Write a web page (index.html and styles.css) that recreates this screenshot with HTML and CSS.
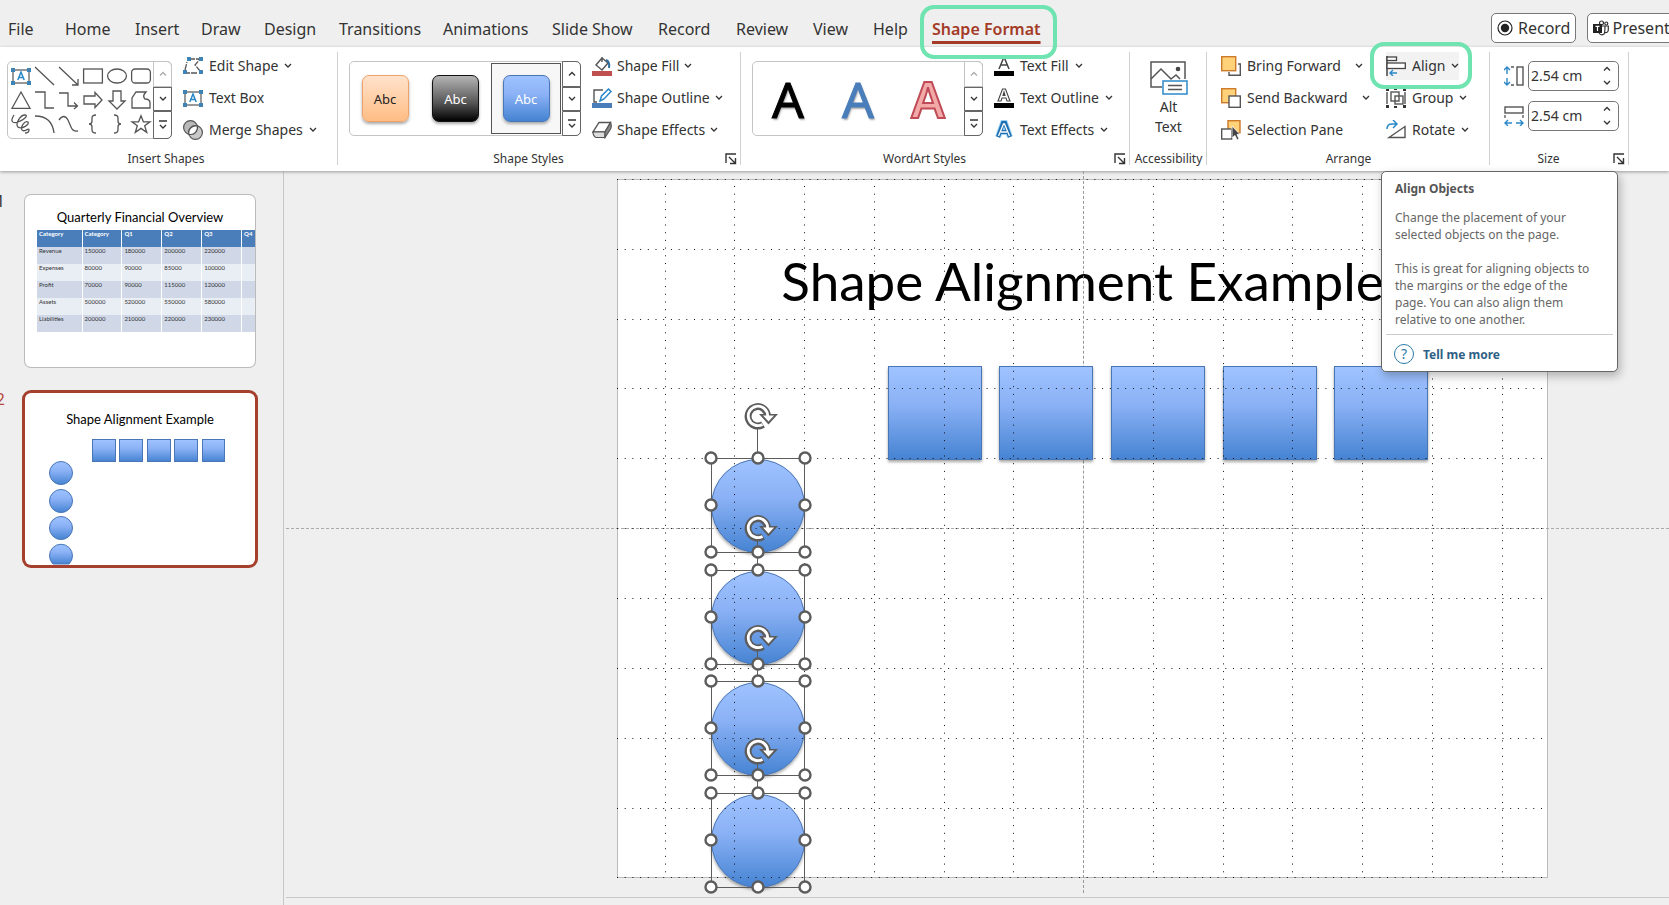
FILE: index.html
```html
<!DOCTYPE html>
<html lang="en">
<head>
<meta charset="utf-8">
<title>Shape Format</title>
<link rel="stylesheet" href="styles.css">
</head>
<body>
<svg class="defs" width="0" height="0" aria-hidden="true">
  <defs>
    <linearGradient id="blue" x1="0" y1="0" x2="0" y2="1">
      <stop offset="0" stop-color="#9fc3ff"/><stop offset=".4" stop-color="#8cb2f6"/><stop offset="1" stop-color="#4583d2"/>
    </linearGradient>
    <filter id="drop" x="-20%" y="-20%" width="140%" height="140%">
      <feDropShadow dx="0" dy="2" stdDeviation="1.5" flood-opacity=".35"/>
    </filter>
    <symbol id="chev" viewBox="0 0 8 8"><path d="M1 2 4 5 7 2" fill="none" stroke="#333" stroke-width="1.3"/></symbol>
    <symbol id="chev-up" viewBox="0 0 8 8"><path d="M1 5.5 4 2.5 7 5.5" fill="none" stroke="currentColor" stroke-width="1.3"/></symbol>
    <symbol id="more" viewBox="0 0 10 10"><path d="M1 1H9M2 5 5 8 8 5" fill="none" stroke="#333" stroke-width="1.3"/></symbol>
    <symbol id="launch" viewBox="0 0 12 12"><path d="M1 10V1H11M4 4 10 10M10.500 5V10.500H5" fill="none" stroke="#333" stroke-width="1.4"/></symbol>
    <symbol id="textbox" viewBox="0 0 20 18">
      <rect x="2" y="3" width="16" height="13" fill="#fff" stroke="#555" stroke-width="1.200"/>
      <path d="M6.800 13 10 5 13.200 13M8 10.500H12" fill="none" stroke="#2b88c8" stroke-width="1.500"/>
      <g fill="#3f82b4" stroke="none"><rect x="0" y="1" width="4" height="4"/><rect x="16" y="1" width="4" height="4"/><rect x="0" y="14" width="4" height="4"/><rect x="16" y="14" width="4" height="4"/></g>
    </symbol>
    <symbol id="handle" viewBox="-7 -7 14 14"><circle r="5.500" fill="#fff" stroke="#5c5c5c" stroke-width="2.400"/></symbol>
    <symbol id="rotor" viewBox="-16 -14 36 28">
      <path d="M5 8.500A9.700 9.700 0 1 1 9.500 0" fill="none" stroke="#5c5c5c" stroke-width="7"/>
      <path d="M1 -2H20L10.500 8.500Z" fill="#5c5c5c"/>
      <path d="M4.500 8.500A9.700 9.700 0 1 1 9.700 0" fill="none" stroke="#fff" stroke-width="2.800"/>
      <path d="M5 -.5H16L10.500 5.500Z" fill="#fff"/>
    </symbol>
    <g id="selection">
      <circle cx="47" cy="47" r="46.500" fill="url(#blue)" stroke="#4a76b5" filter="url(#drop)"/>
    </g>
    <g id="frame">
      <rect x=".5" y=".5" width="93" height="94" fill="none" stroke="#5c5c5c"/>
      <use href="#handle" x="-7" y="-7" width="14" height="14"/><use href="#handle" x="40" y="-7" width="14" height="14"/><use href="#handle" x="87" y="-7" width="14" height="14"/>
      <use href="#handle" x="-7" y="40" width="14" height="14"/><use href="#handle" x="87" y="40" width="14" height="14"/>
      <use href="#handle" x="-7" y="87" width="14" height="14"/><use href="#handle" x="40" y="87" width="14" height="14"/><use href="#handle" x="87" y="87" width="14" height="14"/>
    </g>
  </defs>
</svg>

<header class="tabbar">
  <nav class="tabs" aria-label="Ribbon tabs">
    <button class="tab">File</button><button class="tab">Home</button><button class="tab">Insert</button><button class="tab">Draw</button><button class="tab">Design</button><button class="tab">Transitions</button><button class="tab">Animations</button><button class="tab">Slide Show</button><button class="tab">Record</button><button class="tab">Review</button><button class="tab">View</button><button class="tab">Help</button><button class="tab tab-active">Shape Format</button>
  </nav>
  <div class="actions">
    <button class="action"><svg width="16" height="16" viewBox="0 0 16 16"><circle cx="8" cy="8" r="7" fill="none" stroke="#222" stroke-width="1.200"/><circle cx="8" cy="8" r="4.200" fill="#222"/></svg>Record</button>
    <button class="action action-present"><svg width="16" height="16" viewBox="0 0 16 16"><g fill="none" stroke="#333" stroke-width="1.200"><circle cx="8.500" cy="3" r="2"/><circle cx="13.300" cy="3.500" r="1.500"/><path d="M9 6H15.300V10Q15 13 12 12.500M6 13Q8 16 11 14Q12 13 12 6"/></g><rect y="4" width="9" height="9" fill="#222"/><path d="M2.500 6.300H6.500M4.500 6.300V11" stroke="#fff" stroke-width="1.200"/></svg>Present</button>
  </div>
</header>

<section class="ribbon" aria-label="Shape Format">
  <div class="group group-insert">
    <div class="group-body">
      <div class="gallery gallery-small">
        <div class="shapes">
          <svg viewBox="0 0 20 18"><use href="#textbox"/></svg>
          <svg viewBox="0 0 20 18"><path d="M0 0 19 18"/></svg>
          <svg viewBox="0 0 20 18"><path d="M0 0 19 18M19 12V18H13"/></svg>
          <svg viewBox="0 0 20 18"><rect x=".6" y="2" width="18.800" height="14"/></svg>
          <svg viewBox="0 0 20 18"><ellipse cx="10" cy="9" rx="9.400" ry="7"/></svg>
          <svg viewBox="0 0 20 18"><rect x=".6" y="2" width="18.800" height="14" rx="3.500"/></svg>
          <svg viewBox="0 0 20 18"><path d="M10 1 19 17.300H1Z"/></svg>
          <svg viewBox="0 0 20 18"><path d="M0 1H10V17H19"/></svg>
          <svg viewBox="0 0 20 18"><path d="M0 2H9V15H18M15 11.500 18.500 15 15 18"/></svg>
          <svg viewBox="0 0 20 18"><path d="M1 5H12V1.500L19 9 12 16.500V13H1Z"/></svg>
          <svg viewBox="0 0 20 18"><path d="M6 0H14V10H18L10 18 2 10H6Z"/></svg>
          <svg viewBox="0 0 20 18"><path d="M5 1H15Q11 5 14 8 19 8 19 12V17H1V7Z"/></svg>
          <svg viewBox="0 0 20 18"><path d="M3 0C-1 6 1 9 7 7 15 4 17 0 14 0 9 0 4 9 7 12 11 15 19 9 17 7 14 5 9 12 11 15 13 18 18 12 18 15 18 18 15 18 14 18"/></svg>
          <svg viewBox="0 0 20 18"><path d="M0 1Q17 1 19 18"/></svg>
          <svg viewBox="0 0 20 18"><path d="M0 5Q5 -2 9 5L12 12Q14 17 19 16"/></svg>
          <svg viewBox="0 0 20 18"><path d="M13 0Q9 0 9 3V6Q9 9 6 9 9 9 9 12V15Q9 18 13 18"/></svg>
          <svg viewBox="0 0 20 18"><path d="M7 0Q11 0 11 3V6Q11 9 14 9 11 9 11 12V15Q11 18 7 18"/></svg>
          <svg viewBox="0 0 20 18"><path d="M10 .8 12.400 6.800H19L13.700 10.800 15.700 17.300 10 13.400 4.300 17.300 6.300 10.800 1 6.800H7.600Z"/></svg>
        </div>
        <div class="scroller">
          <button class="off" aria-label="Previous row"><svg width="8" height="8"><use href="#chev-up"/></svg></button>
          <button aria-label="Next row"><svg width="8" height="8"><use href="#chev"/></svg></button>
          <button aria-label="More shapes"><svg width="10" height="10"><use href="#more"/></svg></button>
        </div>
      </div>
      <div class="commands">
        <button class="cmd"><svg width="20" height="18" viewBox="0 0 20 18"><path d="M6 2H17L12 8 18 15M14 16H4M2 13 4 5" fill="none" stroke="#555" stroke-width="1.300" stroke-dasharray="6 1"/><g fill="#3f82b4"><rect x="4" width="4" height="4"/><rect x="16" width="4" height="4"/><rect y="13" width="4" height="4"/><rect x="16" y="13" width="4" height="4"/></g></svg>Edit Shape<svg width="8" height="8"><use href="#chev"/></svg></button>
        <button class="cmd"><svg width="20" height="18"><use href="#textbox"/></svg>Text Box</button>
        <button class="cmd"><svg width="20" height="20" viewBox="0 0 20 20"><g stroke="#555" stroke-width="1.200"><circle cx="7.500" cy="7.500" r="6.900" fill="#b9b9b9"/><circle cx="12.500" cy="12.500" r="6.900" fill="#c9c9c9"/><path d="M14.300 6A6.900 6.900 0 0 1 6 14.300 6.900 6.900 0 0 1 14.300 6Z" fill="#fff"/></g></svg>Merge Shapes<svg width="8" height="8"><use href="#chev"/></svg></button>
      </div>
    </div>
    <div class="group-label">Insert Shapes</div>
  </div>

  <div class="group group-styles">
    <div class="group-body">
      <div class="gallery">
        <div class="swatches">
          <button class="swatch-cell"><span class="swatch swatch-orange">Abc</span></button>
          <button class="swatch-cell"><span class="swatch swatch-black">Abc</span></button>
          <button class="swatch-cell swatch-selected"><span class="swatch swatch-blue">Abc</span></button>
        </div>
        <div class="scroller">
          <button aria-label="Previous row"><svg width="8" height="8"><use href="#chev-up"/></svg></button>
          <button aria-label="Next row"><svg width="8" height="8"><use href="#chev"/></svg></button>
          <button aria-label="More styles"><svg width="10" height="10"><use href="#more"/></svg></button>
        </div>
      </div>
      <div class="commands">
        <button class="cmd"><svg width="20" height="20" viewBox="0 0 20 20"><path d="M10 1V6M10 2 4 9 10 14 16 7Z" fill="#fff" stroke="#555" stroke-width="1.400"/><path d="M14 4Q18 5 17 12" fill="none" stroke="#2f6f9f" stroke-width="2"/><rect y="15" width="20" height="5" fill="#c0504d"/></svg>Shape Fill<svg width="8" height="8"><use href="#chev"/></svg></button>
        <button class="cmd"><svg width="20" height="20" viewBox="0 0 20 20"><path d="M11 2H2V14H5" fill="none" stroke="#555" stroke-width="1.400"/><path d="M8 13 9.500 8 16.500 1 19 3.500 12 11Z" fill="#fff" stroke="#2b88c8" stroke-width="1.500"/><rect y="15" width="20" height="5" fill="#4a7ebb"/></svg>Shape Outline<svg width="8" height="8"><use href="#chev"/></svg></button>
        <button class="cmd"><svg width="20" height="18" viewBox="0 0 20 18"><path d="M7 1.500H18.500L13 11H1Z" fill="#fff" stroke="#555" stroke-width="1.400"/><path d="M1 11H13V16.500H4Q1 15 1 11Z" fill="#ddd" stroke="#555" stroke-width="1.200"/><path d="M13 11 18.500 1.500Q20 5 18.500 8L13 16.500Z" fill="#8a8a8a" stroke="#555" stroke-width="1.200"/></svg>Shape Effects<svg width="8" height="8"><use href="#chev"/></svg></button>
      </div>
    </div>
    <div class="group-label">Shape Styles</div>
    <button class="launcher" aria-label="Format Shape"><svg width="12" height="12"><use href="#launch"/></svg></button>
  </div>

  <div class="group group-wordart">
    <div class="group-body">
      <div class="gallery">
        <div class="wordart">
          <button class="letter letter-black">A</button>
          <button class="letter letter-blue">A</button>
          <button class="letter letter-red">A</button>
        </div>
        <div class="scroller">
          <button class="off" aria-label="Previous row"><svg width="8" height="8"><use href="#chev-up"/></svg></button>
          <button aria-label="Next row"><svg width="8" height="8"><use href="#chev"/></svg></button>
          <button aria-label="More WordArt"><svg width="10" height="10"><use href="#more"/></svg></button>
        </div>
      </div>
      <div class="commands">
        <button class="cmd"><svg width="20" height="20" viewBox="0 0 20 20"><path d="M5 13 10 1 15 13M7 9H13" fill="none" stroke="#444" stroke-width="1.500"/><rect y="15" width="20" height="5"/></svg>Text Fill<svg width="8" height="8"><use href="#chev"/></svg></button>
        <button class="cmd"><svg width="20" height="20" viewBox="0 0 20 20"><path d="M4 13 8.500 1H11.500L16 13H13L12 10H8L7 13ZM9 7.500H11L10 4Z" fill="#fff" stroke="#444" stroke-width="1.100"/><rect y="15" width="20" height="5"/></svg>Text Outline<svg width="8" height="8"><use href="#chev"/></svg></button>
        <button class="cmd"><svg width="20" height="20" viewBox="0 0 20 20"><path d="M4 17 9 3H11L16 17M7 12H13" fill="none" stroke="#9ad2f5" stroke-width="6"/><path d="M4 17 9 3H11L16 17M7 12H13" fill="none" stroke="#1f6fb0" stroke-width="4"/><path d="M4.500 16 9.500 4H10.500L15.500 16M7 12H13" fill="none" stroke="#fff" stroke-width="1.300"/></svg>Text Effects<svg width="8" height="8"><use href="#chev"/></svg></button>
      </div>
    </div>
    <div class="group-label">WordArt Styles</div>
    <button class="launcher" aria-label="Format Text Effects"><svg width="12" height="12"><use href="#launch"/></svg></button>
  </div>

  <div class="group group-alt">
    <div class="group-body">
      <button class="big-cmd"><svg width="38" height="34" viewBox="0 0 38 34"><g fill="none" stroke="#555" stroke-width="1.500"><path d="M12 26H1V1H35V18"/><path d="M1 18 11 8 21 18 26 14 30 18"/></g><circle cx="28" cy="8" r="2.300" fill="#444"/><rect x="13" y="20" width="24" height="13" fill="#fff" stroke="#2b88c8" stroke-width="1.500"/><path d="M18 24.500H32M18 28.500H32" stroke="#555" stroke-width="1.300"/></svg><span>Alt</span><span>Text</span></button>
    </div>
    <div class="group-label">Accessibility</div>
  </div>

  <div class="group group-arrange">
    <div class="group-body">
      <div class="commands commands-stack">
        <button class="cmd"><svg width="20" height="20" viewBox="0 0 20 20"><path d="M17 8H19.300V19.300H8V16" fill="none" stroke="#555" stroke-width="1.400"/><rect x=".7" y=".7" width="14" height="14" fill="#ffd27a" stroke="#cd7a2b" stroke-width="1.400"/></svg>Bring Forward<svg class="split" width="8" height="8"><use href="#chev"/></svg></button>
        <button class="cmd"><svg width="20" height="20" viewBox="0 0 20 20"><rect x=".7" y=".7" width="14" height="14" fill="#ffd27a" stroke="#cd7a2b" stroke-width="1.400"/><rect x="8" y="8" width="11.300" height="11.300" fill="#fff" stroke="#555" stroke-width="1.400"/></svg>Send Backward<svg class="split" width="8" height="8"><use href="#chev"/></svg></button>
        <button class="cmd"><svg width="20" height="20" viewBox="0 0 20 20"><rect x="7" y=".7" width="12" height="12" fill="#ffd27a" stroke="#cd7a2b" stroke-width="1.400"/><rect x=".7" y="9" width="10" height="10" fill="#fff" stroke="#555" stroke-width="1.400"/><path d="M11 6V18L14 15.500 16 20 18 19 16 14.500H19Z" fill="#444" stroke="#fff" stroke-width=".8"/></svg>Selection Pane</button>
      </div>
      <div class="commands">
        <button class="cmd cmd-open"><svg width="20" height="20" viewBox="0 0 20 20"><path d="M1 0V20" stroke="#444" stroke-width="1.500"/><g fill="#fff" stroke="#444" stroke-width="1.300"><rect x="1" y="1" width="9.500" height="3.500"/><rect x="1" y="7" width="18.300" height="5.500"/></g><path d="M11 17H4M7 14 4 17 7 20" fill="none" stroke="#2b88c8" stroke-width="1.400"/></svg>Align<svg width="8" height="8"><use href="#chev"/></svg></button>
        <button class="cmd"><svg width="20" height="20" viewBox="0 0 20 20"><g fill="none" stroke="#555" stroke-width="1.400"><path d="M1 4V16M19 4V16"/><rect x="5" y="4" width="8" height="9"/><rect x="9" y="8" width="8" height="8"/></g><g fill="#333"><rect width="3" height="3"/><rect x="17" width="3" height="3"/><rect y="17" width="3" height="3"/><rect x="17" y="17" width="3" height="3"/><rect x="8" width="3" height="2"/><rect x="8" y="18" width="3" height="2"/></g></svg>Group<svg width="8" height="8"><use href="#chev"/></svg></button>
        <button class="cmd"><svg width="20" height="20" viewBox="0 0 20 20"><path d="M3 17.500H19V6.500Z" fill="#fff" stroke="#555" stroke-width="1.400"/><path d="M1 9Q1 4 6 4H10M7 0 11 4 7 8" fill="none" stroke="#2b88c8" stroke-width="1.500"/></svg>Rotate<svg width="8" height="8"><use href="#chev"/></svg></button>
      </div>
    </div>
    <div class="group-label">Arrange</div>
  </div>

  <div class="group group-size">
    <div class="group-body">
      <div class="sizes">
        <label class="size" aria-label="Shape height"><svg width="20" height="20" viewBox="0 0 20 20"><path d="M3 1V8M0 4 3 1 6 4M3 12V19M0 16 3 19 6 16" fill="none" stroke="#2b88c8" stroke-width="1.400"/><path d="M7 1H10M7 19H10" stroke="#555" stroke-width="1.300"/><rect x="13" y="1" width="6" height="18" fill="#fff" stroke="#555" stroke-width="1.400"/></svg>
          <span class="spin"><input type="text" value="2.54 cm"><span class="spin-buttons"><button aria-label="Increase height"><svg width="8" height="8"><use href="#chev-up"/></svg></button><button aria-label="Decrease height"><svg width="8" height="8"><use href="#chev"/></svg></button></span></span></label>
        <label class="size" aria-label="Shape width"><svg width="20" height="20" viewBox="0 0 20 20"><path d="M8 17H1M4 14 1 17 4 20M12 17H19M16 14 19 17 16 20" fill="none" stroke="#2b88c8" stroke-width="1.400"/><path d="M1 9V12M19 9V12" stroke="#555" stroke-width="1.300"/><rect x="1" y="1" width="18" height="6" fill="#fff" stroke="#555" stroke-width="1.400"/></svg>
          <span class="spin"><input type="text" value="2.54 cm"><span class="spin-buttons"><button aria-label="Increase width"><svg width="8" height="8"><use href="#chev-up"/></svg></button><button aria-label="Decrease width"><svg width="8" height="8"><use href="#chev"/></svg></button></span></span></label>
      </div>
    </div>
    <div class="group-label">Size</div>
    <button class="launcher" aria-label="Size and Position"><svg width="12" height="12"><use href="#launch"/></svg></button>
  </div>

  <aside class="tooltip" role="tooltip">
    <h2>Align Objects</h2>
    <p>Change the placement of your selected objects on the page.</p>
    <p>This is great for aligning objects to the margins or the edge of the page. You can also align them relative to one another.</p>
    <a class="more-link" href="#"><span class="help" aria-hidden="true">?</span>Tell me more</a>
  </aside>
</section>

<main class="workspace">
  <ol class="panel">
    <li class="item"><span class="number">1</span>
      <div class="thumb">
        <h3>Quarterly Financial Overview</h3>
        <table class="finance">
          <thead><tr><th>Category</th><th>Category</th><th>Q1</th><th>Q2</th><th>Q3</th><th>Q4</th></tr></thead>
          <tbody>
            <tr><td>Revenue</td><td>150000</td><td>180000</td><td>200000</td><td>220000</td><td></td></tr>
            <tr><td>Expenses</td><td>80000</td><td>90000</td><td>85000</td><td>100000</td><td></td></tr>
            <tr><td>Profit</td><td>70000</td><td>90000</td><td>115000</td><td>120000</td><td></td></tr>
            <tr><td>Assets</td><td>500000</td><td>520000</td><td>550000</td><td>580000</td><td></td></tr>
            <tr><td>Liabilities</td><td>200000</td><td>210000</td><td>220000</td><td>230000</td><td></td></tr>
          </tbody>
        </table>
      </div>
    </li>
    <li class="item item-current"><span class="number">2</span>
      <div class="thumb">
        <h3>Shape Alignment Example</h3>
        <svg class="thumb-art" viewBox="0 0 230 173"><g fill="url(#blue)" stroke="#4a76b5">
          <rect x="67.500" y="46.500" width="23" height="22"/><rect x="94.500" y="46.500" width="23" height="22"/><rect x="122.500" y="46.500" width="23" height="22"/><rect x="149.500" y="46.500" width="23" height="22"/><rect x="177.500" y="46.500" width="22" height="22"/>
          <circle cx="36" cy="80" r="11.500"/><circle cx="36" cy="108" r="11.500"/><circle cx="36" cy="135" r="11.500"/><path d="M28 171A11.500 11.500 0 1 1 44 171Z"/></g></svg>
      </div>
    </li>
  </ol>
  <div class="canvas">
    <div class="slide">
      <h1>Shape Alignment Example</h1>
      <svg class="objects" viewBox="0 0 931 699">
        <g fill="url(#blue)" stroke="#4a76b5" filter="url(#drop)">
          <rect x="271.500" y="187.500" width="93" height="93"/><rect x="382.500" y="187.500" width="93" height="93"/><rect x="494.500" y="187.500" width="93" height="93"/><rect x="606.500" y="187.500" width="93" height="93"/><rect x="717.500" y="187.500" width="93" height="93"/>
        </g>
        <use href="#selection" x="94" y="280"/><use href="#selection" x="94" y="392"/><use href="#selection" x="94" y="503"/><use href="#selection" x="94" y="615"/>
        <g stroke="#111" stroke-dasharray="1 6.700" fill="none">
          <path d="M0 .5H927M0 70.500H927M0 140.500H927M0 209.500H927M0 279.500H927M0 349.500H927M0 419.500H927M0 489.500H927M0 559.500H927M0 629.500H927M0 698.500H927"/>
          <path d="M48.500 7V698M117.500 7V698M187.500 7V698M257.500 7V698M327.500 7V698M396.500 7V698M536.500 7V698M606.500 7V698M675.500 7V698M745.500 7V698M815.500 7V698M885.500 7V698"/>
        </g>
        <path d="M140.500 246V280M140.500 358V392M140.500 468V502M140.500 580V614" stroke="#5c5c5c"/>
        <use href="#frame" x="94" y="279"/><use href="#frame" x="94" y="391"/><use href="#frame" x="94" y="502"/><use href="#frame" x="94" y="614"/>
        <use href="#rotor" x="125" y="223" width="36" height="28"/><use href="#rotor" x="125" y="335" width="36" height="28"/><use href="#rotor" x="125" y="445" width="36" height="28"/><use href="#rotor" x="125" y="558" width="36" height="28"/>
      </svg>
    </div>
  </div>
</main>
</body>
</html>
```
FILE: styles.css
```css
* { box-sizing: border-box; }

body {
  margin: 0;
  min-height: 100vh;
  display: flex;
  flex-direction: column;
  background: #efefef;
  color: #333;
  font: 14px/20px "Noto Sans", "Open Sans", sans-serif;
  overflow: hidden;
}

button {
  padding: 0;
  border: 0;
  background: none;
  color: inherit;
  font: inherit;
  white-space: nowrap;
}

h1, h2, h3, p, ol { margin: 0; padding: 0; font-weight: 400; }
svg { flex: none; }
.defs { position: absolute; }

/* Tab strip */
.tabbar {
  position: relative;
  z-index: 4;
  display: flex;
  justify-content: space-between;
  height: 47px;
  font-size: 16px;
}

.tabs {
  display: grid;
  grid-template-columns: 57px 70px 66px 63px 75px 104px 109px 106px 78px 77px 60px 59px auto;
  justify-items: start;
  align-items: center;
  padding: 10px 0 0 8px;
}

.tab { height: 32px; }

.tab-active {
  position: relative;
  color: #a33b27;
  font-weight: 600;
  text-decoration: underline 3px;
  text-underline-offset: 6px;
}

.tab-active::after,
.cmd-open::after {
  content: "";
  position: absolute;
  z-index: 2;
  border: 4px solid #6fe3b0;
  border-radius: 14px;
  pointer-events: none;
}

.tab-active::after { inset: -8px -16px -14px -12px; }

.actions {
  display: flex;
  gap: 11px;
  width: 178px;
  flex: none;
  padding-top: 13px;
  overflow: hidden;
}

.action {
  display: flex;
  flex: none;
  align-items: center;
  gap: 5px;
  height: 30px;
  padding: 0 5px;
  border: 1px solid #777;
  border-radius: 5px;
  background: #fff;
}

.action-present { gap: 3px; padding-right: 30px; }

/* Ribbon */
.ribbon {
  position: relative;
  z-index: 3;
  display: flex;
  padding-top: 3px;
  background: #fff;
  box-shadow: 0 1px 3px #9a9a9a;
}

.group {
  position: relative;
  flex: none;
}

.group::after {
  content: "";
  position: absolute;
  inset: 2px 0 6px auto;
  border-right: 1px solid #d0d0d0;
}

.group-body { display: flex; height: 96px; }
.group-label { height: 25px; font-size: 12px; line-height: 26px; text-align: center; }

.group-insert { width: 338px; }
.group-insert .group-label { padding-right: 6px; }
.group-insert .group-body { padding-left: 7px; gap: 11px; }
.group-styles { width: 403px; }
.group-styles .group-label { padding-right: 22px; }
.group-styles .group-body { padding-left: 11px; gap: 11px; }
.group-styles .cmd { gap: 5px; }
.group-wordart { width: 389px; }
.group-wordart .group-label { padding-right: 22px; }
.group-wordart .group-body { padding-left: 11px; gap: 11px; }
.group-alt { width: 77px; }
.group-alt .group-body { justify-content: center; padding-top: 11px; }
.group-arrange { width: 283px; }
.group-arrange .group-body { padding-left: 14px; }
.group-size { width: 139px; }
.group-size .group-body { padding-left: 14px; }
.group-size .group-label { padding-right: 22px; }

.launcher { position: absolute; right: 4px; bottom: 6px; height: 12px; line-height: 0; }

.commands {
  display: grid;
  grid-template-rows: repeat(3, 32px);
  justify-items: start;
  align-items: center;
}

.commands-stack { width: 165px; flex: none; }
.cmd { display: flex; align-items: center; gap: 6px; height: 28px; }
.cmd .split { margin-left: 8px; }

.cmd-open { position: relative; background: #f2f2f2; }
.cmd-open::after { inset: -10px -13px -9px -16px; }

.big-cmd { display: flex; flex-direction: column; align-items: center; height: 80px; }
.big-cmd svg { margin-bottom: 2px; }

.gallery {
  display: flex;
  height: 75px;
  margin-top: 11px;
  border: 1px solid #c4c4c4;
  border-radius: 5px;
}

.gallery-small { height: 78px; }

.shapes {
  display: grid;
  grid-template-columns: repeat(6, 20px);
  grid-template-rows: repeat(3, 18px);
  gap: 6px 4px;
  padding: 5px 3px;
  width: 146px;
}

.shapes svg { width: 20px; height: 18px; overflow: visible; fill: none; stroke: #555; stroke-width: 1.300; }

.scroller {
  display: grid;
  grid-template-rows: 26px 24px 1fr;
  width: 19px;
  margin: -1px;
}

.scroller button {
  border: 1px solid #666;
  line-height: 0;
}

.scroller button:first-child { border-radius: 0 5px 0 0; }
.scroller button:last-child { border-radius: 0 0 5px 0; }
.scroller .off { border-color: #c4c4c4; color: #aaa; }

.swatches { display: grid; grid-template-columns: 70px 71px 70px; margin-right: 2px; }
.swatch-cell { display: grid; place-items: center; margin: 1px 0; border: 1px solid transparent; }
.swatch-selected { border-color: #555; background: #f7f7f7; }

.swatch {
  display: grid;
  place-items: center;
  width: 47px;
  height: 47px;
  border: 1px solid;
  border-radius: 7px;
  box-shadow: 0 2px 3px #aaa;
  font-size: 13px;
}

.swatch-orange { border-color: #eda26b; background: linear-gradient(#ffe2cb, #ffbd84); color: #222; }
.swatch-black { border-color: #111; background: linear-gradient(#b5b5b5, #555 60%, #000); color: #fff; }
.swatch-blue { border-color: #4a76b5; background: linear-gradient(#9fc3ff, #8cb2f6 40%, #4583d2); color: #fff; }

.wordart { display: grid; grid-template-columns: repeat(3, 70px); margin-right: 2px; }
.letter { font-size: 50px; line-height: 72px; text-shadow: 1px 2px 2px #aaa; }
.letter-black { color: #000; -webkit-text-stroke: 1px #000; }
.letter-blue { color: #4a7ebb; -webkit-text-stroke: 1px #4a7ebb; }
.letter-red { color: #f4a9a9; font-weight: 600; -webkit-text-stroke: 2px #be4b55; text-shadow: none; }

.sizes { display: grid; align-content: start; gap: 10px; padding-top: 11px; }
.size { display: flex; align-items: center; gap: 4px; }
.spin { display: flex; width: 91px; height: 30px; border: 1px solid #777; border-radius: 5px; }
.spin input { flex: none; width: 66px; padding: 0 0 0 2px; border: 0; background: none; color: inherit; font: inherit; }
.spin-buttons { display: grid; flex: 1; grid-template-rows: 14px 14px; line-height: 0; }

/* Tooltip under the Align button */
.tooltip {
  position: absolute;
  top: 124px;
  left: 1381px;
  width: 237px;
  padding: 8px 4px 7px;
  border: 1px solid #666;
  border-radius: 5px;
  background: #fff;
  box-shadow: 2px 4px 10px #0004;
  color: #666;
  font-size: 12px;
  line-height: 17px;
}

.tooltip h2, .tooltip p { padding: 0 21px 0 9px; }
.tooltip h2 { margin-bottom: 12px; font-size: 12px; line-height: 17px; font-weight: 700; color: #555; }
.tooltip p + p { margin: 17px 0 6px; }

.more-link {
  display: flex;
  align-items: center;
  gap: 9px;
  padding: 9px 8px 0;
  border-top: 1px solid #ccc;
  color: #2f5f85;
  font-weight: 700;
  text-decoration: none;
}

.help {
  width: 20px;
  height: 20px;
  border: 1px solid #2b7ba8;
  border-radius: 50%;
  color: #2b7ba8;
  font-size: 14px;
  font-weight: 400;
  line-height: 18px;
  text-align: center;
}

/* Slide list */
.workspace { display: flex; flex: 1; }

.panel {
  flex: none;
  width: 284px;
  padding-top: 24px;
  border-right: 1px solid #c6c6c6;
  list-style: none;
}

.item { display: grid; grid-template-columns: 5px 230px; gap: 20px; margin-bottom: 26px; }

.number {
  display: flex;
  justify-content: flex-end;
  height: 12px;
  font-size: 16px;
  line-height: 12px;
}

.thumb {
  position: relative;
  height: 172px;
  border-radius: 6px;
  background: #fff;
  box-shadow: 0 0 0 1px #bbb;
  overflow: hidden;
}

.thumb h3 { color: #000; font: 13px/16px Lato, sans-serif; text-align: center; }
.item:first-child h3 { padding-top: 14px; }
.item-current .number { color: #b5473a; }
.item-current .thumb { box-shadow: 0 0 0 3px #a5402e; }
.item-current h3 { padding-top: 18px; }
.thumb-art { position: absolute; inset: 0; }

.finance {
  width: 245px;
  margin: 5px 0 0 12px;
  border-collapse: collapse;
  table-layout: fixed;
  font: 6px/8px Lato, sans-serif;
}

.finance th:first-child { width: 45px; }
.finance th, .finance td { height: 17px; padding: 0 2px; border-right: 1px solid #fff; text-align: left; vertical-align: top; }
.finance th { background: #4a7ebb; color: #fff; }
.finance td { background: #e9edf4; }
.finance tr:nth-child(odd) td { background: #d0d8e8; }

/* Editing canvas with its centre guides */
.canvas {
  position: relative;
  flex: 1;
  padding: 8px 0 0 333px;
}

.canvas::before,
.canvas::after {
  content: "";
  position: absolute;
  z-index: 1;
}

.canvas::before { inset: 0 auto 12px 799px; border-left: 1px dashed #999; }
.canvas::after { inset: 357px 0 7px 2px; border-top: 1px dashed #aaa; border-bottom: 1px solid #c8c8c8; }

.slide {
  position: relative;
  width: 931px;
  height: 699px;
  border: 1px solid #bbb;
  background: #fff;
}

.slide h1 {
  padding-top: 69px;
  color: #000;
  font: 53px/64px Lato, sans-serif;
  text-align: center;
  white-space: nowrap;
}

.objects { position: absolute; z-index: 2; inset: -1px; width: 931px; height: 699px; overflow: visible; }
```
